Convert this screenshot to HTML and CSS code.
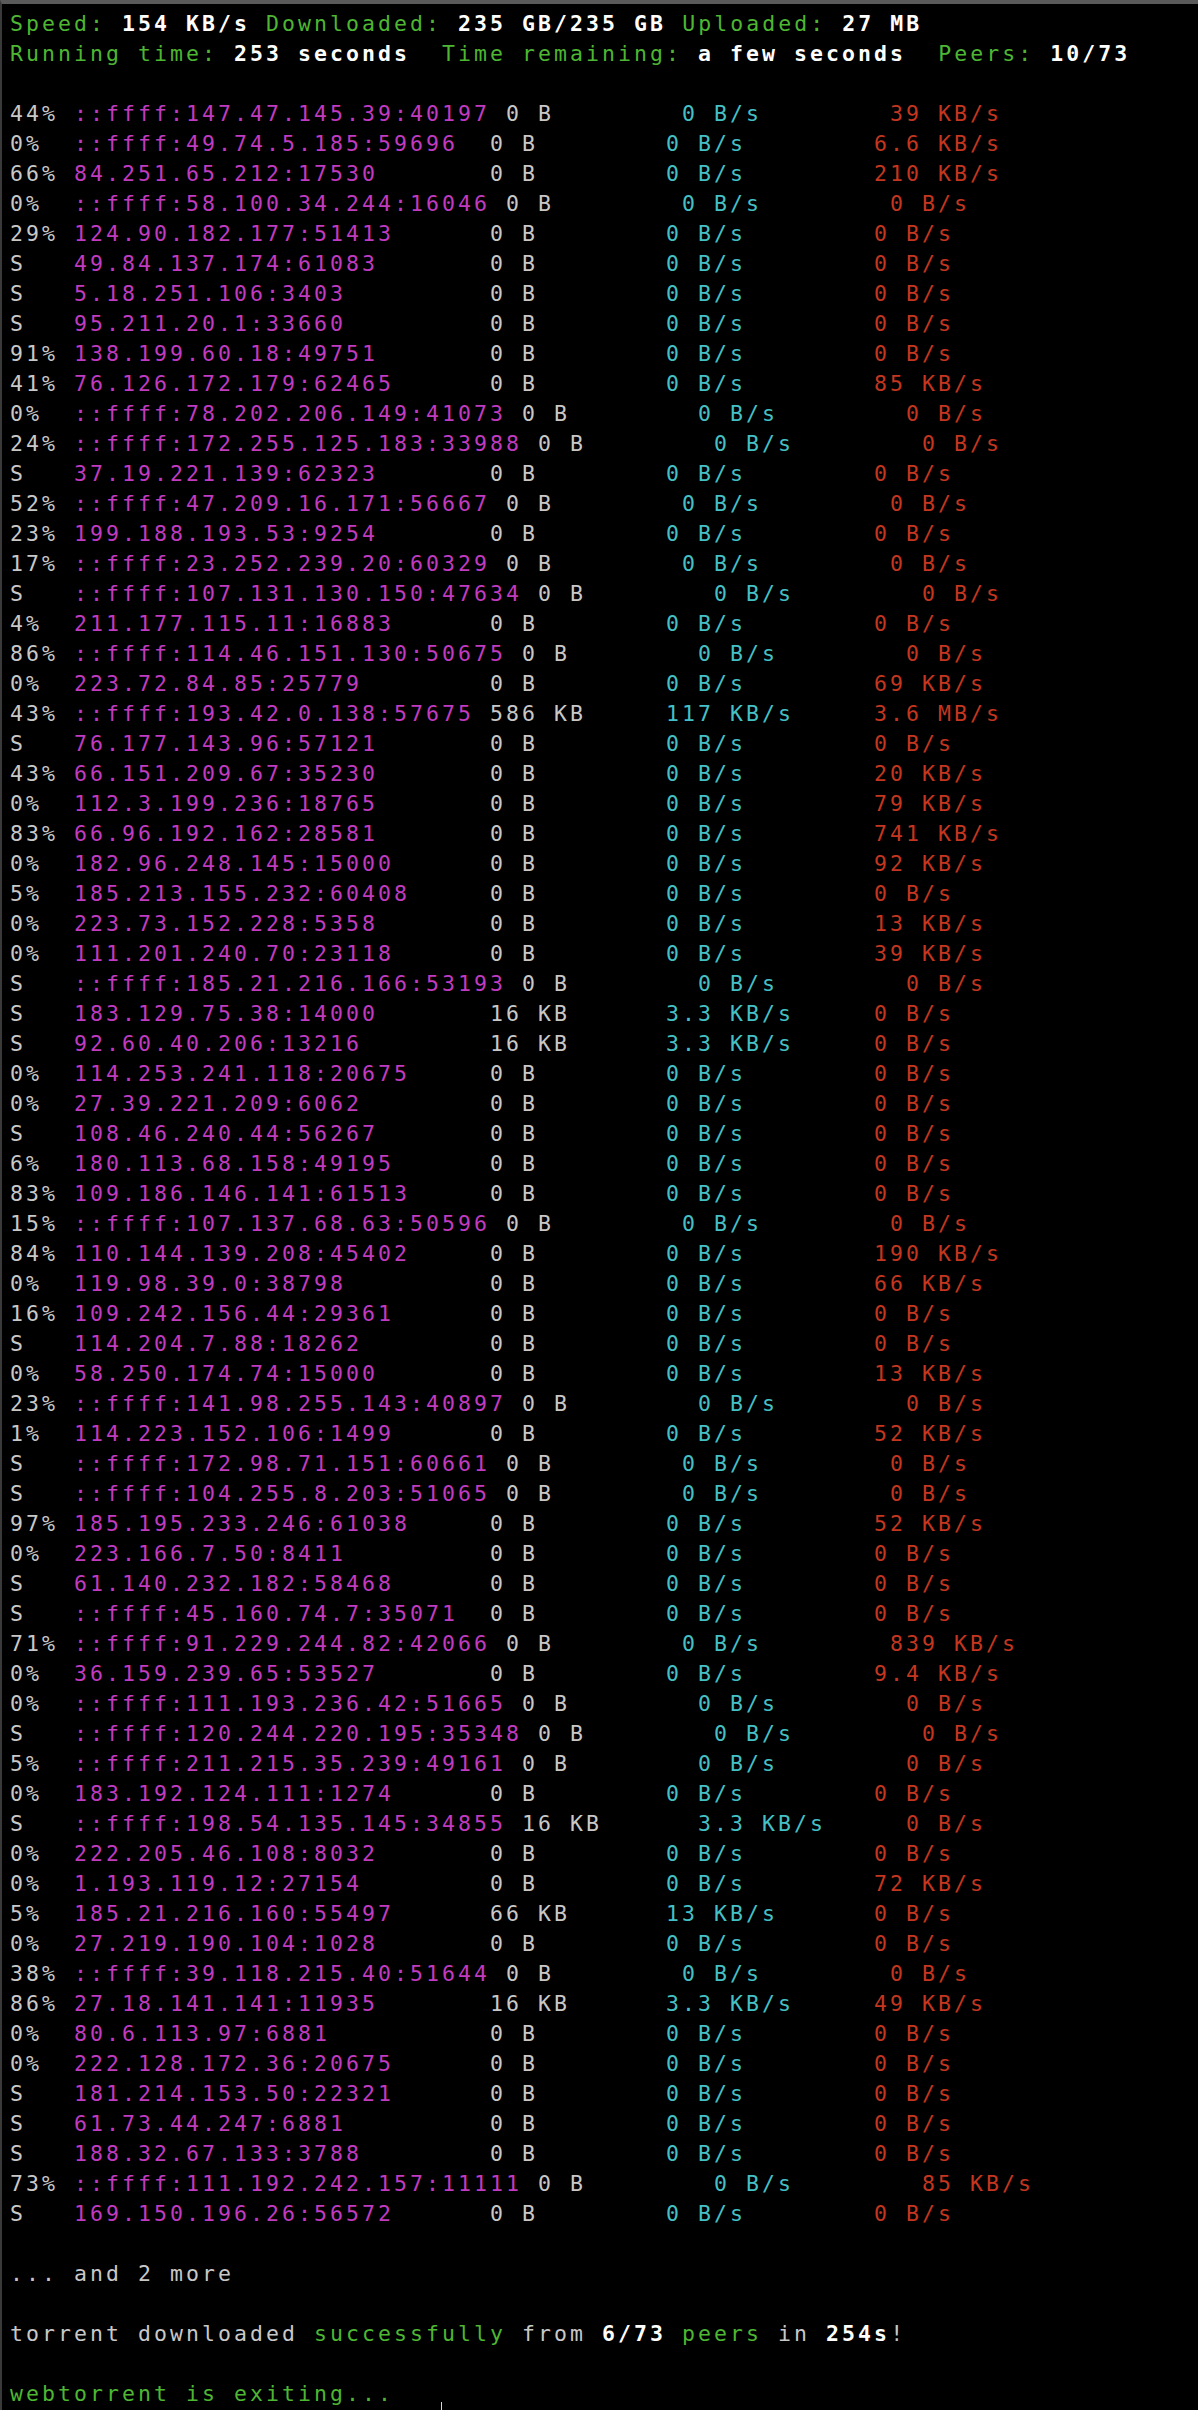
FILE: index.html
```html
<!DOCTYPE html>
<html lang="en">
<head>
<meta charset="utf-8">
<title>webtorrent</title>
<link rel="stylesheet" href="styles.css">
</head>
<body>
<div class="term">
<pre class="out"><span class="g">Speed:</span> <span class="b">154 KB/s</span> <span class="g">Downloaded:</span> <span class="b">235 GB/235 GB</span> <span class="g">Uploaded:</span> <span class="b">27 MB</span>
<span class="g">Running time:</span> <span class="b">253 seconds</span>  <span class="g">Time remaining:</span> <span class="b">a few seconds</span>  <span class="g">Peers:</span> <span class="b">10/73</span>

44% <span class="m">::ffff:147.47.145.39:40197</span> 0 B        <span class="c">0 B/s</span>        <span class="r">39 KB/s</span>
0%  <span class="m">::ffff:49.74.5.185:59696</span>  0 B        <span class="c">0 B/s</span>        <span class="r">6.6 KB/s</span>
66% <span class="m">84.251.65.212:17530</span>       0 B        <span class="c">0 B/s</span>        <span class="r">210 KB/s</span>
0%  <span class="m">::ffff:58.100.34.244:16046</span> 0 B        <span class="c">0 B/s</span>        <span class="r">0 B/s</span>
29% <span class="m">124.90.182.177:51413</span>      0 B        <span class="c">0 B/s</span>        <span class="r">0 B/s</span>
S   <span class="m">49.84.137.174:61083</span>       0 B        <span class="c">0 B/s</span>        <span class="r">0 B/s</span>
S   <span class="m">5.18.251.106:3403</span>         0 B        <span class="c">0 B/s</span>        <span class="r">0 B/s</span>
S   <span class="m">95.211.20.1:33660</span>         0 B        <span class="c">0 B/s</span>        <span class="r">0 B/s</span>
91% <span class="m">138.199.60.18:49751</span>       0 B        <span class="c">0 B/s</span>        <span class="r">0 B/s</span>
41% <span class="m">76.126.172.179:62465</span>      0 B        <span class="c">0 B/s</span>        <span class="r">85 KB/s</span>
0%  <span class="m">::ffff:78.202.206.149:41073</span> 0 B        <span class="c">0 B/s</span>        <span class="r">0 B/s</span>
24% <span class="m">::ffff:172.255.125.183:33988</span> 0 B        <span class="c">0 B/s</span>        <span class="r">0 B/s</span>
S   <span class="m">37.19.221.139:62323</span>       0 B        <span class="c">0 B/s</span>        <span class="r">0 B/s</span>
52% <span class="m">::ffff:47.209.16.171:56667</span> 0 B        <span class="c">0 B/s</span>        <span class="r">0 B/s</span>
23% <span class="m">199.188.193.53:9254</span>       0 B        <span class="c">0 B/s</span>        <span class="r">0 B/s</span>
17% <span class="m">::ffff:23.252.239.20:60329</span> 0 B        <span class="c">0 B/s</span>        <span class="r">0 B/s</span>
S   <span class="m">::ffff:107.131.130.150:47634</span> 0 B        <span class="c">0 B/s</span>        <span class="r">0 B/s</span>
4%  <span class="m">211.177.115.11:16883</span>      0 B        <span class="c">0 B/s</span>        <span class="r">0 B/s</span>
86% <span class="m">::ffff:114.46.151.130:50675</span> 0 B        <span class="c">0 B/s</span>        <span class="r">0 B/s</span>
0%  <span class="m">223.72.84.85:25779</span>        0 B        <span class="c">0 B/s</span>        <span class="r">69 KB/s</span>
43% <span class="m">::ffff:193.42.0.138:57675</span> 586 KB     <span class="c">117 KB/s</span>     <span class="r">3.6 MB/s</span>
S   <span class="m">76.177.143.96:57121</span>       0 B        <span class="c">0 B/s</span>        <span class="r">0 B/s</span>
43% <span class="m">66.151.209.67:35230</span>       0 B        <span class="c">0 B/s</span>        <span class="r">20 KB/s</span>
0%  <span class="m">112.3.199.236:18765</span>       0 B        <span class="c">0 B/s</span>        <span class="r">79 KB/s</span>
83% <span class="m">66.96.192.162:28581</span>       0 B        <span class="c">0 B/s</span>        <span class="r">741 KB/s</span>
0%  <span class="m">182.96.248.145:15000</span>      0 B        <span class="c">0 B/s</span>        <span class="r">92 KB/s</span>
5%  <span class="m">185.213.155.232:60408</span>     0 B        <span class="c">0 B/s</span>        <span class="r">0 B/s</span>
0%  <span class="m">223.73.152.228:5358</span>       0 B        <span class="c">0 B/s</span>        <span class="r">13 KB/s</span>
0%  <span class="m">111.201.240.70:23118</span>      0 B        <span class="c">0 B/s</span>        <span class="r">39 KB/s</span>
S   <span class="m">::ffff:185.21.216.166:53193</span> 0 B        <span class="c">0 B/s</span>        <span class="r">0 B/s</span>
S   <span class="m">183.129.75.38:14000</span>       16 KB      <span class="c">3.3 KB/s</span>     <span class="r">0 B/s</span>
S   <span class="m">92.60.40.206:13216</span>        16 KB      <span class="c">3.3 KB/s</span>     <span class="r">0 B/s</span>
0%  <span class="m">114.253.241.118:20675</span>     0 B        <span class="c">0 B/s</span>        <span class="r">0 B/s</span>
0%  <span class="m">27.39.221.209:6062</span>        0 B        <span class="c">0 B/s</span>        <span class="r">0 B/s</span>
S   <span class="m">108.46.240.44:56267</span>       0 B        <span class="c">0 B/s</span>        <span class="r">0 B/s</span>
6%  <span class="m">180.113.68.158:49195</span>      0 B        <span class="c">0 B/s</span>        <span class="r">0 B/s</span>
83% <span class="m">109.186.146.141:61513</span>     0 B        <span class="c">0 B/s</span>        <span class="r">0 B/s</span>
15% <span class="m">::ffff:107.137.68.63:50596</span> 0 B        <span class="c">0 B/s</span>        <span class="r">0 B/s</span>
84% <span class="m">110.144.139.208:45402</span>     0 B        <span class="c">0 B/s</span>        <span class="r">190 KB/s</span>
0%  <span class="m">119.98.39.0:38798</span>         0 B        <span class="c">0 B/s</span>        <span class="r">66 KB/s</span>
16% <span class="m">109.242.156.44:29361</span>      0 B        <span class="c">0 B/s</span>        <span class="r">0 B/s</span>
S   <span class="m">114.204.7.88:18262</span>        0 B        <span class="c">0 B/s</span>        <span class="r">0 B/s</span>
0%  <span class="m">58.250.174.74:15000</span>       0 B        <span class="c">0 B/s</span>        <span class="r">13 KB/s</span>
23% <span class="m">::ffff:141.98.255.143:40897</span> 0 B        <span class="c">0 B/s</span>        <span class="r">0 B/s</span>
1%  <span class="m">114.223.152.106:1499</span>      0 B        <span class="c">0 B/s</span>        <span class="r">52 KB/s</span>
S   <span class="m">::ffff:172.98.71.151:60661</span> 0 B        <span class="c">0 B/s</span>        <span class="r">0 B/s</span>
S   <span class="m">::ffff:104.255.8.203:51065</span> 0 B        <span class="c">0 B/s</span>        <span class="r">0 B/s</span>
97% <span class="m">185.195.233.246:61038</span>     0 B        <span class="c">0 B/s</span>        <span class="r">52 KB/s</span>
0%  <span class="m">223.166.7.50:8411</span>         0 B        <span class="c">0 B/s</span>        <span class="r">0 B/s</span>
S   <span class="m">61.140.232.182:58468</span>      0 B        <span class="c">0 B/s</span>        <span class="r">0 B/s</span>
S   <span class="m">::ffff:45.160.74.7:35071</span>  0 B        <span class="c">0 B/s</span>        <span class="r">0 B/s</span>
71% <span class="m">::ffff:91.229.244.82:42066</span> 0 B        <span class="c">0 B/s</span>        <span class="r">839 KB/s</span>
0%  <span class="m">36.159.239.65:53527</span>       0 B        <span class="c">0 B/s</span>        <span class="r">9.4 KB/s</span>
0%  <span class="m">::ffff:111.193.236.42:51665</span> 0 B        <span class="c">0 B/s</span>        <span class="r">0 B/s</span>
S   <span class="m">::ffff:120.244.220.195:35348</span> 0 B        <span class="c">0 B/s</span>        <span class="r">0 B/s</span>
5%  <span class="m">::ffff:211.215.35.239:49161</span> 0 B        <span class="c">0 B/s</span>        <span class="r">0 B/s</span>
0%  <span class="m">183.192.124.111:1274</span>      0 B        <span class="c">0 B/s</span>        <span class="r">0 B/s</span>
S   <span class="m">::ffff:198.54.135.145:34855</span> 16 KB      <span class="c">3.3 KB/s</span>     <span class="r">0 B/s</span>
0%  <span class="m">222.205.46.108:8032</span>       0 B        <span class="c">0 B/s</span>        <span class="r">0 B/s</span>
0%  <span class="m">1.193.119.12:27154</span>        0 B        <span class="c">0 B/s</span>        <span class="r">72 KB/s</span>
5%  <span class="m">185.21.216.160:55497</span>      66 KB      <span class="c">13 KB/s</span>      <span class="r">0 B/s</span>
0%  <span class="m">27.219.190.104:1028</span>       0 B        <span class="c">0 B/s</span>        <span class="r">0 B/s</span>
38% <span class="m">::ffff:39.118.215.40:51644</span> 0 B        <span class="c">0 B/s</span>        <span class="r">0 B/s</span>
86% <span class="m">27.18.141.141:11935</span>       16 KB      <span class="c">3.3 KB/s</span>     <span class="r">49 KB/s</span>
0%  <span class="m">80.6.113.97:6881</span>          0 B        <span class="c">0 B/s</span>        <span class="r">0 B/s</span>
0%  <span class="m">222.128.172.36:20675</span>      0 B        <span class="c">0 B/s</span>        <span class="r">0 B/s</span>
S   <span class="m">181.214.153.50:22321</span>      0 B        <span class="c">0 B/s</span>        <span class="r">0 B/s</span>
S   <span class="m">61.73.44.247:6881</span>         0 B        <span class="c">0 B/s</span>        <span class="r">0 B/s</span>
S   <span class="m">188.32.67.133:3788</span>        0 B        <span class="c">0 B/s</span>        <span class="r">0 B/s</span>
73% <span class="m">::ffff:111.192.242.157:11111</span> 0 B        <span class="c">0 B/s</span>        <span class="r">85 KB/s</span>
S   <span class="m">169.150.196.26:56572</span>      0 B        <span class="c">0 B/s</span>        <span class="r">0 B/s</span>

... and 2 more

torrent downloaded <span class="g">successfully</span> from <span class="b">6/73</span> <span class="g">peers</span> in <span class="b">254s</span>!

<span class="g">webtorrent is exiting...</span></pre>
<span class="pointer"></span>
</div>
</body>
</html>
```

FILE: styles.css
```css
html, body {
  margin: 0;
  padding: 0;
  background: #000;
}

.term {
  position: relative;
  min-height: 100vh;
  box-sizing: border-box;
  background: #000;
  border-top: 4px solid #5a5a5a;
  border-left: 2px solid #3a3a3a;
  padding: 5px 0 0 8px;
  overflow: hidden;
}

.out {
  margin: 0;
  font-family: "DejaVu Sans Mono", "Liberation Mono", monospace;
  font-size: 21.5px;
  letter-spacing: 3.056px;
  line-height: 30px;
  color: #c8c8c8;
  white-space: pre;
}

.g { color: #4db632; }
.b { color: #ffffff; font-weight: bold; }
.m { color: #c13bc1; }
.c { color: #45c0c6; }
.r { color: #c4361f; }

.pointer {
  position: absolute;
  left: 439px;
  top: 2398px;
  width: 1px;
  height: 10px;
  background: #d8d8d8;
}
```
